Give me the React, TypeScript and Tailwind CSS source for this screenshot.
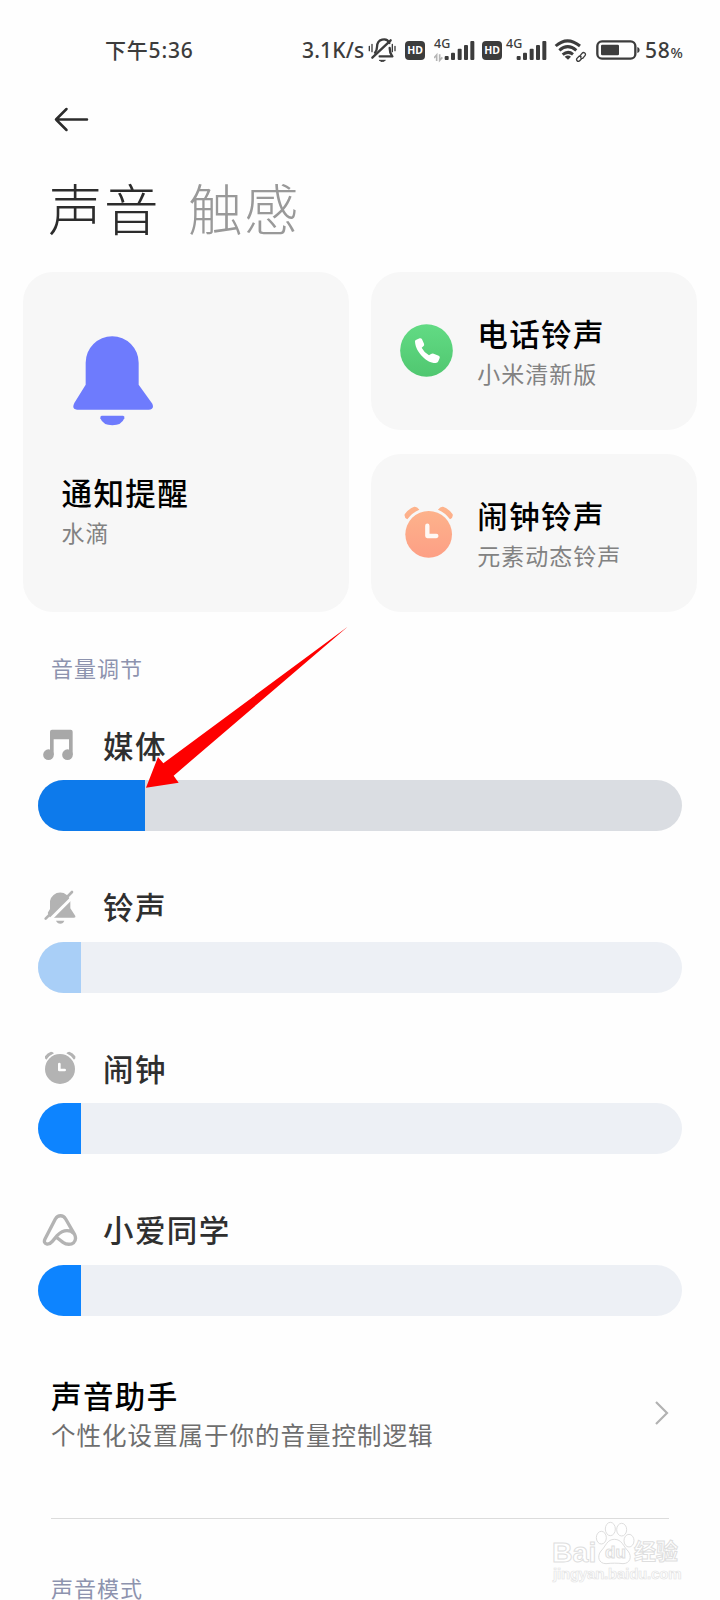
import type { ReactNode } from "react";

function HdBadge() {
  return (
    <span className="flex h-[19px] w-[20px] items-center justify-center rounded-[4px] bg-[#3c3c3c] font-['Noto_Sans'] text-[10.5px] leading-none font-bold text-white">
      HD
    </span>
  );
}

function Signal({ data }: { data?: boolean }) {
  return (
    <span className="relative block h-[24px] w-[42px]">
      <span className="absolute -top-[2px] left-0 font-['Noto_Sans'] text-[12.5px] leading-[14px] font-medium text-[#3c3c3c]">4G</span>
      <svg className="block h-[24px] w-[42px]" viewBox="0 0 126 72" fill="#3c3c3c">
        {data && (
          <path d="M8 66V48L0 57M17 46v18l8-9" fill="none" stroke="#b5b5b5" strokeWidth="5" />
        )}
        <rect x="32" y="51" width="12" height="12" rx="3" />
        <rect x="51" y="41" width="12" height="22" rx="3" />
        <rect x="71" y="29" width="12" height="34" rx="3" />
        <rect x="90" y="18" width="12" height="45" rx="3" />
        <rect x="109" y="6" width="12" height="57" rx="3" />
      </svg>
    </span>
  );
}

function SilentIcon() {
  return (
    <svg className="-mt-[2px] h-[24px] w-[28px]" viewBox="235 24 84 72" fill="none" stroke="#3c3c3c" strokeWidth="7" strokeLinecap="round" strokeLinejoin="round">
      <path d="M256 68q6-7 6-17c0-25 29-30 37-12M300 54c0 15 3 18 8 25h-38" />
      <path d="M303 31l-55 52" />
      <path d="M239 49v13M247 43v22M316 49v13M308 43v22" strokeWidth="4" />
      <path d="M270 91h17l-8 4z" fill="#3c3c3c" strokeWidth="3" />
    </svg>
  );
}

function WifiIcon() {
  return (
    <svg className="-mt-[1px] h-[24px] w-[33px]" viewBox="223 24 99 72" fill="none" stroke="#3c3c3c" strokeWidth="9">
      <path d="M228 48q35-31 73 0M239 61q25-22 51 0M249 74q16-13 31-1" />
      <path d="M255 80q10-7 19 0l-9 9z" fill="#3c3c3c" stroke="none" />
      <g strokeWidth="4" strokeLinecap="round">
        <path d="M302 76l5-6c5-6 14 1 9 7l-5 6c-3 3-6 2-8 0" />
        <path d="M304 79l-5-1-7 7c-4 6 3 12 8 7l5-5" />
      </g>
    </svg>
  );
}

function BatteryIcon() {
  return (
    <svg className="-mt-[1px] h-[20px] w-[44px]" viewBox="347 29 132 60">
      <rect x="351" y="33" width="114" height="52" rx="14" fill="none" stroke="#3c3c3c" strokeWidth="7" />
      <rect x="362" y="43" width="54" height="32" rx="4" fill="#3c3c3c" />
      <path d="M471 50q7 1 7 9t-7 9z" fill="#3c3c3c" />
    </svg>
  );
}

function StatusBar() {
  return (
    <div className="flex h-[101px] items-center pl-[105px] font-['Noto_Sans','Noto_Sans_CJK_SC',sans-serif] text-[21px] font-medium text-[#3c3c3c]">
      <span className="w-[197px] text-[21px] tracking-[0.8px]">下午5:36</span>
      <span className="w-[66px] tracking-[0.2px]">3.1K/s</span>
      <SilentIcon />
      <span className="ml-[9px] pb-[1px]"><HdBadge /></span>
      <span className="ml-[9px]"><Signal data /></span>
      <span className="ml-[6px] pb-[1px]"><HdBadge /></span>
      <span className="ml-[4px]"><Signal /></span>
      <span className="ml-[6px]"><WifiIcon /></span>
      <span className="ml-[9px]"><BatteryIcon /></span>
      <span className="ml-[5px] tracking-[0.7px]">58<span className="text-[14.5px]">%</span></span>
    </div>
  );
}

function BellIcon() {
  return (
    <svg className="h-[90px] w-[80px]" viewBox="160 229 240 270" fill="#6e7bfd">
      <path d="M198 309a79.500 79.500 0 0 1 159 0v66l41 57q7 18-11 18H172q-17-2-8-20l34-55z" />
      <path d="M246 468h64q6 1 4 8-8 21-36 21t-36-21q-1-7 4-8z" />
    </svg>
  );
}

function PhoneIcon() {
  return (
    <svg className="h-[53px] w-[53px]" viewBox="120 193 159 159">
      <defs>
        <linearGradient id="call" x1="0" y1="0" x2="0" y2="1">
          <stop offset="0" stopColor="#62db84" />
          <stop offset="1" stopColor="#50c770" />
        </linearGradient>
      </defs>
      <circle cx="199.500" cy="272.500" r="79" fill="url(#call)" />
      <path fill="#fff" d="M165 246q-1-4 4-6l10-4q5-1 7 3l6 13q2 5-2 8l-5 4q7 14 22 23l6-4q4-2 8-1l15 6q5 2 3 7l-4 10q-2 5-8 5c-16 0-29-9-39-19-12-12-22-28-23-45z" />
    </svg>
  );
}

function AlarmIcon() {
  return (
    <svg className="h-[52px] w-[49px]" viewBox="132 740 147 156">
      <defs>
        <linearGradient id="alarm" gradientUnits="userSpaceOnUse" x1="0" y1="740" x2="0" y2="895">
          <stop offset="0" stopColor="#fdb48c" />
          <stop offset="1" stopColor="#fd9f85" />
        </linearGradient>
      </defs>
      <g fill="url(#alarm)">
        <circle cx="206" cy="825" r="70" />
        <path d="M134 765q13-18 29-23 8-1 15 9-22 9-36 29-10-5-8-15zM278 765q-13-18-29-23-8-1-15 9 22 9 36 29 10-5 8-15z" />
      </g>
      <path d="M202 799v31h27" fill="none" stroke="#fff8f4" strokeWidth="13" strokeLinecap="round" strokeLinejoin="round" />
    </svg>
  );
}

function MusicIcon() {
  return (
    <svg className="h-[34px] w-[34px]" viewBox="70 324 102 102" fill="#a8a8a8">
      <path d="M91 335q0-6 6-6h56q6 0 6 6v69h-11v-46h-46v46H91z" />
      <circle cx="86.500" cy="404" r="16" />
      <circle cx="143.500" cy="404" r="16" />
    </svg>
  );
}

function MutedBellIcon() {
  return (
    <svg className="h-[34px] w-[34px]" viewBox="69 58 102 102" fill="#b3b3b3">
      <path d="M90 91a31 31 0 0 1 61 0v22l15 23q2 5-4 5H80q-5-1-2-6l12-20z" />
      <path d="M66 141L82 125 90 141 84 155Z" fill="#fefefe" />
      <path d="M167 70L84 153" stroke="#fefefe" strokeWidth="9" />
      <path d="M156 64l-79 80" stroke="#b3b3b3" strokeWidth="8" strokeLinecap="round" />
      <path d="M108 150h25q-3 9-12 9t-13-9z" />
    </svg>
  );
}

function MutedAlarmIcon() {
  return (
    <svg className="h-[34px] w-[34px]" viewBox="69 64 102 102" fill="#b3b3b3">
      <circle cx="120" cy="118" r="45" />
      <path d="M75 80q7-10 18-14 6 0 9 5-14 6-23 19-6-3-4-10zM166 80q-7-10-18-14-6 0-9 5 14 6 23 19 6-3 4-10z" />
      <path d="M118 103v18h16" fill="none" stroke="#fff" strokeWidth="8" strokeLinecap="round" strokeLinejoin="round" />
    </svg>
  );
}

function AssistantIcon() {
  return (
    <svg className="-ml-[1px] h-[34px] w-[36px]" viewBox="66 65 108 102" fill="none" stroke="#b3b3b3" strokeWidth="10" strokeLinecap="round" strokeLinejoin="round">
      <path d="M112 140l17 13c11 8 25 7 32 1 7-7 7-15 3-24l-27-47c-8-13-23-13-31 0L75 143c-4 8-1 14 6 15 7 1 11-2 16-8l15-18c9-9 18-14 29-14q13 0 20 8" />
    </svg>
  );
}

function RingCard({ icon, title, sub }: { icon: ReactNode; title: string; sub: string }) {
  return (
    <div className="flex h-[158.500px] items-center rounded-[30px] bg-[#f7f7f7] pl-[28.500px]">
      <div className="flex w-[77.500px] items-center">{icon}</div>
      <div>
        <div className="text-[30.5px] leading-[44px] font-medium tracking-[1.4px] text-black">{title}</div>
        <div className="text-[23px] leading-[36px] tracking-[1px] text-[#828282]">{sub}</div>
      </div>
    </div>
  );
}

function VolumeRow({ icon, label, track, fill }: { icon: ReactNode; label: string; track: string; fill: string }) {
  return (
    <div className="h-[161.5px]">
      <div className="flex h-[70px] items-center pl-[5px]">
        <div className="flex w-[60px]">{icon}</div>
        <div className="pb-[1px] text-[30.5px] leading-[44px] font-medium tracking-[1.4px] text-[#2f2f2f]">{label}</div>
      </div>
      <div className={`h-[51px] overflow-hidden rounded-full ${track}`}>
        <div className={`h-full ${fill}`} />
      </div>
    </div>
  );
}

function RedArrow() {
  return (
    <svg className="absolute top-[620px] left-[140px] h-[170px] w-[214px]" viewBox="360 0 642 510" fill="#fe0000">
      <path d="M983 20L430 430 414 411 378 503 476 488 461 467 712 252Z" />
    </svg>
  );
}

function Watermark() {
  return (
    <div className="absolute top-[1520px] left-[550px] h-[68px] w-[134px] font-['Liberation_Sans','Noto_Sans_CJK_SC',sans-serif] text-white">
      <svg className="absolute top-0 left-0 h-[68px] w-[134px]" viewBox="60 450 402 204" fill="#fff" stroke="#dedede" strokeWidth="3">
        <ellipse cx="214" cy="503" rx="15" ry="19" />
        <ellipse cx="241" cy="477" rx="15" ry="20" />
        <ellipse cx="275" cy="479" rx="15" ry="19" />
        <ellipse cx="297" cy="512" rx="15" ry="19" />
        <path d="M253 508c23 0 26 20 41 35 14 18 5 38-15 38-16-2-34-2-51 0-22 0-28-22-15-38 15-15 18-35 40-35z" />
      </svg>
      <span className="absolute top-[17px] left-[2px] text-[28.5px] leading-[30px] font-bold [-webkit-text-stroke:1px_#dedede]">Bai</span>
      <span className="absolute top-[21px] left-[55px] text-[17px] leading-[24px] font-bold [-webkit-text-stroke:1px_#dedede]">du</span>
      <span className="absolute top-[17px] left-[84px] text-[22px] leading-[30px] font-bold [-webkit-text-stroke:1px_#dedede]">经验</span>
      <span className="absolute top-[44px] left-[3px] text-[15px] leading-[20px] font-bold tracking-[-0.2px] [-webkit-text-stroke:0.7px_#e4e4e4]">jingyan.baidu.com</span>
    </div>
  );
}

export default function App() {
  return (
    <div className="relative h-[1600px] w-[720px] overflow-hidden bg-[#fefefe] font-['Noto_Sans_CJK_SC',sans-serif]">
      <StatusBar />
      <div className="flex h-[39px] items-center pb-[2px] pl-[53px]">
        <svg className="h-[26px] w-[38px]" viewBox="0 0 38 26" fill="none" stroke="#2c2c2c" strokeWidth="2.500" strokeLinecap="round" strokeLinejoin="round">
          <path d="M34 12.500H3M13.500 2L3 12.500l10.500 10.500" />
        </svg>
      </div>
      <div className="flex h-[131.500px] items-center gap-[28px] pt-[2px] pl-[48px] text-[54.500px] leading-[80px] font-light tracking-[1.500px]">
        <span className="text-[#2c2c2c]">声音</span>
        <span className="text-[#999999]">触感</span>
      </div>

      <div className="grid grid-cols-2 gap-[22.500px] pr-[23px] pl-[23px]">
        <div className="h-[340.500px] rounded-[30px] bg-[#f7f7f7] pl-[38.500px]">
          <div className="pt-[64.500px] pl-[11.500px]"><BellIcon /></div>
          <div className="mt-[44px] text-[30.5px] leading-[44px] font-medium tracking-[1.400px] text-black">通知提醒</div>
          <div className="text-[23px] leading-[36px] tracking-[1px] text-[#828282]">水滴</div>
        </div>
        <div className="flex flex-col justify-between">
          <RingCard icon={<PhoneIcon />} title="电话铃声" sub="小米清新版" />
          <RingCard icon={<span className="-mt-[1px] pl-[4px]"><AlarmIcon /></span>} title="闹钟铃声" sub="元素动态铃声" />
        </div>
      </div>

      <div className="flex h-[98px] items-center pt-[13px] pl-[51px] text-[22px] tracking-[1px] text-[#8d93ae]">音量调节</div>

      <div className="h-[646px] pr-[38px] pl-[38px]">
        <VolumeRow icon={<MusicIcon />} label="媒体" track="bg-[#dadde2]" fill="w-[107px] bg-[#0d7aeb]" />
        <VolumeRow icon={<MutedBellIcon />} label="铃声" track="bg-[#edf0f5]" fill="w-[43px] bg-[#a9cff7]" />
        <VolumeRow icon={<MutedAlarmIcon />} label="闹钟" track="bg-[#edf0f5]" fill="w-[43px] bg-[#0d84ff]" />
        <VolumeRow icon={<AssistantIcon />} label="小爱同学" track="bg-[#edf0f5]" fill="w-[43px] bg-[#0d84ff]" />
      </div>

      <div className="mr-[51px] ml-[51px] flex h-[163px] items-start justify-between border-b border-[#dcdcdc]">
        <div className="pt-[17px]">
          <div className="text-[30.5px] leading-[44px] font-medium tracking-[1.400px] text-black">声音助手</div>
          <div className="text-[24.500px] leading-[36px] tracking-[1px] text-[#6e6e6e]">个性化设置属于你的音量控制逻辑</div>
        </div>
        <svg className="mt-[43.500px] h-[26px] w-[16px]" viewBox="0 0 16 26" fill="none" stroke="#b2b2b2" strokeWidth="2.200">
          <path d="M3 2l11 11L3 24" />
        </svg>
      </div>
      <div className="pt-[57px] pl-[51px] text-[22px] leading-[22px] tracking-[1px] text-[#8d93ae]">声音模式</div>

      <RedArrow />
      <Watermark />
    </div>
  );
}
